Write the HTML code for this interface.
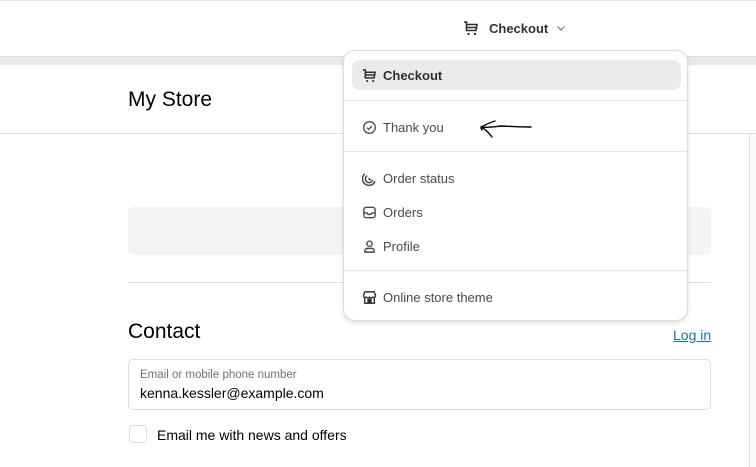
<!DOCTYPE html>
<html><head><meta charset="utf-8"><style>
*{box-sizing:border-box;margin:0;padding:0}
body{width:756px;height:467px;overflow:hidden;background:#fff;font-family:"Liberation Sans",sans-serif;position:relative}
.top{position:absolute;left:0;top:0;width:756px;height:57px;background:#fff;border-top:1px solid #e3e3e3;border-bottom:1px solid #dcdcdc}
.band{position:absolute;left:0;top:57px;width:756px;height:8px;background:#ebebeb}
.hdr{position:absolute;left:0;top:65px;width:756px;height:69px;border-bottom:1px solid #dedede;background:#fff}
.store{position:absolute;left:128px;top:88px;font-size:21px;color:#000}
.rcol{position:absolute;left:749px;top:134px;width:7px;height:333px;background:#fafafa;border-left:1px solid #dedede}
.gbox{position:absolute;left:128px;top:207px;width:583px;height:48px;background:#f4f4f4;border-radius:5px}
.hr{position:absolute;left:128px;top:282px;width:583px;height:1px;background:#dedede}
.contact{position:absolute;left:128px;top:320px;font-size:21px;color:#000}
.login{position:absolute;left:673px;top:327px;font-size:14px;color:#1773b0;text-decoration:underline}
.inp{position:absolute;left:128px;top:359px;width:583px;height:51px;border:1px solid #dedede;border-radius:5px}
.lab{position:absolute;left:140px;top:369px;font-size:11.5px;color:#707070}
.val{position:absolute;left:140px;top:385px;font-size:14px;color:#000}
.cb{position:absolute;left:129px;top:425px;width:18px;height:18px;border:1px solid #dedede;border-radius:4px}
.cbl{position:absolute;left:157px;top:427px;font-size:14px;color:#000}
.tb{position:absolute;left:463px;top:20px;font-size:13px;font-weight:bold;color:#303030;display:flex;align-items:center}
.menu{position:absolute;left:343px;top:50px;width:345px;height:271px;background:#fff;border:1px solid #dcdcdc;border-radius:12px;box-shadow:0 2px 4px rgba(0,0,0,.12)}
.it{position:absolute;left:8px;width:329px;height:30px;display:flex;align-items:center;font-size:13px;color:#4a4a4a;padding-left:10px}
.it svg{margin-right:6px}
.sel{background:#ebebeb;border-radius:8px;color:#303030;font-weight:bold}
.sep{position:absolute;left:0;width:343px;height:1px;background:#e6e6e6}
svg{flex:none}
</style></head><body>
<div class="top"></div>
<div class="band"></div>
<div class="hdr"></div>
<div class="store">My Store</div>
<div class="rcol"></div>
<div class="gbox"></div>
<div class="hr"></div>
<div class="contact">Contact</div>
<div class="login">Log in</div>
<div class="inp"></div>
<div class="lab">Email or mobile phone number</div>
<div class="val">kenna.kessler@example.com</div>
<div class="cb"></div>
<div class="cbl">Email me with news and offers</div>

<div class="tb"><svg width="16" height="16" viewBox="0 0 16 16" fill="none" stroke="#303030" stroke-width="1.6"><path d="M1 2h2.5v8.5h9.5l1-6H3.5M3.5 7.5h10"/><rect x="4.5" y="13" width="2" height="2" fill="#303030" stroke="none"/><rect x="11" y="13" width="2" height="2" fill="#303030" stroke="none"/></svg><span style="margin-left:10px">Checkout</span><svg style="margin-left:8px" width="10" height="10" viewBox="0 0 10 10" fill="none" stroke="#777" stroke-width="1.2"><path d="M1.5 3.5l3.5 3.5 3.5-3.5"/></svg></div>

<div class="menu">
<div class="it sel" style="top:9px"><svg width="15" height="15" viewBox="0 0 16 16" fill="none" stroke="#303030" stroke-width="1.6"><path d="M1 2h2.5v8.5h9.5l1-6H3.5M3.5 7.5h10"/><rect x="4.5" y="13" width="2" height="2" fill="#303030" stroke="none"/><rect x="11" y="13" width="2" height="2" fill="#303030" stroke="none"/></svg>Checkout</div>
<div class="sep" style="top:49px"></div>
<div class="it" style="top:61px"><svg width="15" height="15" viewBox="0 0 16 16" fill="none" stroke="#4a4a4a" stroke-width="1.4"><circle cx="8" cy="8" r="6.2"/><path d="M5.3 8.2l1.8 1.8 3.5-3.6"/></svg>Thank you</div>
<div class="sep" style="top:100px"></div>
<div class="it" style="top:112px"><svg width="15" height="15" viewBox="0 0 16 16" fill="none" stroke="#4a4a4a" stroke-width="1.6"><path d="M3 3a7 7 0 1 0 11 8M5.5 5a4 4 0 1 0 6 4.5M8 7.5a1 1 0 1 0 1.5 1.2"/></svg>Order status</div>
<div class="it" style="top:146px"><svg width="15" height="15" viewBox="0 0 16 16" fill="none" stroke="#4a4a4a" stroke-width="1.5"><rect x="2" y="2.5" width="12" height="11" rx="2.5"/><path d="M2 8.5h3.5l1 1.5h3l1-1.5H14"/></svg>Orders</div>
<div class="it" style="top:180px"><svg width="15" height="15" viewBox="0 0 16 16" fill="none" stroke="#4a4a4a" stroke-width="1.5"><circle cx="8" cy="5" r="2.8"/><path d="M3 14v-1.5a2.5 2.5 0 0 1 2.5-2.5h5a2.5 2.5 0 0 1 2.5 2.5V14z"/></svg>Profile</div>
<div class="sep" style="top:219px"></div>
<div class="it" style="top:231px"><svg width="15" height="15" viewBox="0 0 16 16" fill="none" stroke="#303030" stroke-width="1.5"><path d="M3 2h10l1.5 4a2 2 0 0 1-3.2 1.6 2 2 0 0 1-3.3 0 2 2 0 0 1-3.3 0A2 2 0 0 1 1.5 6z"/><path d="M2.8 8v6h10.4V8"/><rect x="6.5" y="10" width="3" height="4" fill="#303030"/></svg>Online store theme</div>
</div>

<svg style="position:absolute;left:476px;top:116px" width="60" height="24" viewBox="0 0 60 24" fill="none" stroke="#000" stroke-width="1.4" stroke-linecap="round"><path d="M5 11c6-3 10-5 14-6M5 11c6 1 12 0 20-1 6 0 12 1 30 1M5 11c4 2 8 6 11 10M5 12l1 2"/></svg>
</body></html>
